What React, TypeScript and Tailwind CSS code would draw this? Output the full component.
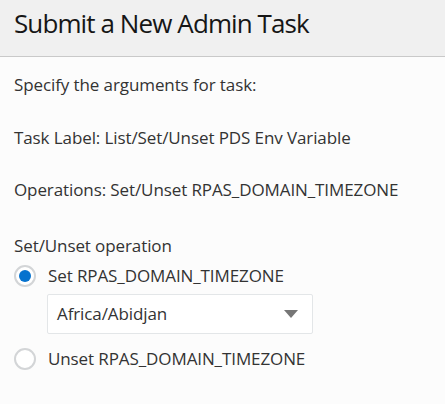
import { useState } from "react";

const FONT = "font-['Open_Sans','Noto_Sans',sans-serif]";

function Radio({ checked, label, onClick }: { checked: boolean; label: string; onClick: () => void }) {
  return (
    <label className="flex items-center gap-[12px] h-[32px] cursor-pointer" onClick={onClick}>
      <span className="w-[22px] h-[22px] rounded-full border-2 border-[#d3d5d7] bg-white flex items-center justify-center shrink-0">
        {checked && <span className="w-[12px] h-[12px] rounded-full bg-[#0572ce]" />}
      </span>
      <span>{label}</span>
    </label>
  );
}

export default function App() {
  const [mode, setMode] = useState<"set" | "unset">("set");

  return (
    <div className={`w-[445px] h-[404px] bg-[#fcfcfc] text-[#333333] ${FONT}`}>
      {/* Header */}
      <div className="h-[57px] bg-[#f0f0f0] border-b border-[#c9c9c9] px-[14px] pt-[8px]">
        <h1 className="text-[26px] leading-[30px] text-[#161616] tracking-[-0.9px]">Submit a New Admin Task</h1>
      </div>

      {/* Body */}
      <div className="px-[14px] text-[17px] leading-[24px] tracking-[-0.1px]">
        <p className="mt-[16px]">Specify the arguments for task:</p>
        <p className="mt-[29px]">Task Label: List/Set/Unset PDS Env Variable</p>
        <p className="mt-[28px]">Operations: Set/Unset RPAS_DOMAIN_TIMEZONE</p>

        <div className="mt-[32px]">Set/Unset operation</div>
        <div className="mt-[2px]">
          <Radio checked={mode === "set"} label="Set RPAS_DOMAIN_TIMEZONE" onClick={() => setMode("set")} />
          <div className="ml-[33px] mt-[2px] w-[266px] h-[40px] border border-[#e3e6e8] bg-white rounded-[2px] flex items-center justify-between pl-[9px] pr-[14px]">
            <span>Africa/Abidjan</span>
            <svg width="14" height="8" viewBox="0 0 14 8">
              <path d="M0 0 L14 0 L7 8 Z" fill="#767676" />
            </svg>
          </div>
          <div className="mt-[9px]">
            <Radio checked={mode === "unset"} label="Unset RPAS_DOMAIN_TIMEZONE" onClick={() => setMode("unset")} />
          </div>
        </div>
      </div>
    </div>
  );
}
